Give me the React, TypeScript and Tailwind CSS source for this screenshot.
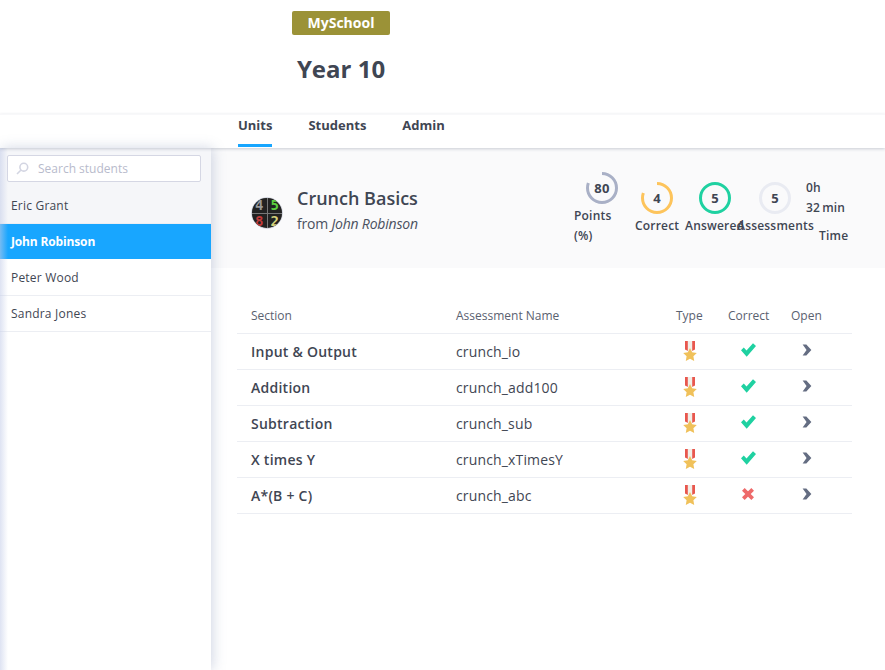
import React from "react";

const FONT = "font-['Open_Sans','Noto_Sans',sans-serif]";

function Ring({ value, color, pct = 100 }: { value: string; color: string; pct?: number }) {
  const r = 14.5;
  const c = 2 * Math.PI * r;
  return (
    <div className="relative h-8 w-8">
      <svg width="32" height="32" viewBox="0 0 32 32" className="-rotate-90">
        <circle cx="16" cy="16" r={r} fill="none" stroke={color} strokeWidth="3" strokeDasharray={`${(c * pct) / 100} ${c}`} />
      </svg>
      <span className="absolute inset-0 flex items-center justify-center text-[13px] font-bold text-[#3f4653]">{value}</span>
    </div>
  );
}

function Medal() {
  return (
    <svg width="14" height="21" viewBox="0 0 14 21">
      <path d="M2 0h10v8.5L7 11 2 8.5z" fill="#e8574e" />
      <path d="M4.8 0h4.4v10H4.8z" fill="#f1efe9" />
      <path d="M7 7l2.1 4.2 4.7.7-3.4 3.3.8 4.8L7 17.8 2.8 20l.8-4.8L.2 11.9l4.7-.7z" fill="#f0c15a" />
    </svg>
  );
}

function Check() {
  return (
    <svg width="15" height="14" viewBox="0 0 15 14">
      <path d="M0 7.2l2.8-2.6 2.7 2.9L12 0.3l3 2.6L5.7 13.7z" fill="#1fd1a1" />
    </svg>
  );
}

function Cross() {
  return (
    <svg width="14" height="14" viewBox="0 0 12 12">
      <path d="M2 2l8 8M10 2l-8 8" stroke="#ee6a6a" strokeWidth="3.2" />
    </svg>
  );
}

function Chevron() {
  return (
    <svg width="10" height="12" viewBox="0 0 9 11">
      <path d="M0.5 0.5h3.4L8.5 5.5l-4.6 5H0.5l3.6-5z" fill="#646d82" />
    </svg>
  );
}

const students = ["Eric Grant", "John Robinson", "Peter Wood", "Sandra Jones"];
const rows = [
  ["Input & Output", "crunch_io", true],
  ["Addition", "crunch_add100", true],
  ["Subtraction", "crunch_sub", true],
  ["X times Y", "crunch_xTimesY", true],
  ["A*(B + C)", "crunch_abc", false],
] as const;

export default function App() {
  return (
    <div className={`${FONT} flex h-[670px] w-[885px] flex-col overflow-hidden bg-white text-[#3f4653]`}>
      <header className="h-[114px] shrink-0 pl-[292px] pt-[11px]">
        <div className="flex h-6 w-[98px] items-center justify-center rounded-[2px] bg-[#9b9237] text-sm font-bold text-white">MySchool</div>
        <h1 className="mt-4 w-[98px] whitespace-nowrap text-center text-[24px] leading-[36px] font-bold">Year 10</h1>
      </header>
      <nav className="relative z-20 flex h-[34px] shrink-0 gap-9 border-t border-[#f8f8fa] pl-[238px] text-[13px] font-bold shadow-[0_1px_3px_rgba(60,70,100,0.25)]">
        <div className="h-[32px] border-b-[3px] border-[#18a6ff] pt-[1px]">Units</div>
        <div className="pt-[1px]">Students</div>
        <div className="pt-[1px]">Admin</div>
      </nav>
      <div className="flex min-h-0 flex-1">
        <aside className="relative z-10 w-[211px] shrink-0 bg-white shadow-[2px_0_12px_rgba(110,125,170,0.3)]">
          <div className="h-[40px] bg-[#f5f6f9] pl-[7px] pr-[10px] pt-[7px]">
            <div className="flex h-[27px] items-center rounded-[2px] border border-[#d5d7e4] bg-white pl-[8px]">
              <svg width="13" height="13" viewBox="0 0 13 13" fill="none" stroke="#d3d5e2" strokeWidth="1.6">
                <circle cx="7.8" cy="5.2" r="3.9" />
                <path d="M4.8 8.2L1 12" />
              </svg>
              <span className="ml-[9px] text-xs text-[#b8bbcc]">Search students</span>
            </div>
          </div>
          {students.map((s, i) => (
            <div
              key={s}
              className={`flex items-center pl-[11px] text-xs ${
                i === 1
                  ? "mb-px h-[35px] bg-[#18a6ff] font-bold tracking-[-0.15px] text-white"
                  : `h-9 border-b border-[#eceef3] tracking-[0.2px] ${i === 0 ? "bg-[#f5f6f9]" : "bg-white"}`
              }`}
            >
              {s}
            </div>
          ))}
          <div className="pointer-events-none absolute inset-y-0 left-0 w-2 bg-linear-to-r from-[rgba(195,204,232,0.55)] to-transparent" />
        </aside>
        <main className="min-w-0 flex-1">
          <section className="flex h-[120px] bg-[#fafafb] pl-[40px]">
            <div className="mt-[49px] flex h-8 w-8 shrink-0 self-start overflow-hidden rounded-full border border-[#cfd3dd] bg-[#222]">
              <div className="grid h-full w-full grid-cols-2 gap-px bg-[#777] text-center font-['DejaVu_Sans_Mono',monospace] text-[14px] leading-[15px] font-bold">
                <span className="bg-[#222] text-[#9a9a9a]">4</span>
                <span className="bg-[#222] text-[#5ccf3f]">5</span>
                <span className="bg-[#222] text-[#c23a3a]">8</span>
                <span className="bg-[#222] text-[#d4d07a]">2</span>
              </div>
            </div>
            <div className="ml-[14px] mt-[37px] w-[277px] shrink-0">
              <h2 className="text-[18px] leading-[26px] font-semibold whitespace-nowrap">Crunch Basics</h2>
              <p className="mt-[2px] text-sm leading-[22px] tracking-[-0.2px] whitespace-nowrap text-[#4a5160]">
                from <em className="font-normal">John Robinson</em>
              </p>
            </div>
            <div className="flex text-xs leading-5 font-semibold tracking-[0.2px]">
              <div className="w-[61px] pt-6">
                <div className="ml-3"><Ring value="80" color="#a9b0c6" pct={80} /></div>
                <div className="mt-[2px] w-10">Points (%)</div>
              </div>
              <div className="w-[50px] pt-[34px]">
                <div className="ml-[6px]"><Ring value="4" color="#fdc45c" pct={80} /></div>
                <div className="mt-[2px] whitespace-nowrap">Correct</div>
              </div>
              <div className="w-[52px] pt-[34px]">
                <div className="ml-[14px]"><Ring value="5" color="#1fd1a1" /></div>
                <div className="mt-[2px] whitespace-nowrap">Answered</div>
              </div>
              <div className="w-[69px] pt-[34px]">
                <div className="ml-[22px]"><Ring value="5" color="#e9ebf2" /></div>
                <div className="mt-[2px] whitespace-nowrap">Assessments</div>
              </div>
              <div className="w-[50px] pt-[30px]">
                <div>0h</div>
                <div>32<span className="ml-[2px]">min</span></div>
                <div className="ml-[13px] mt-2">Time</div>
              </div>
            </div>
          </section>
          <section className="pl-[26px] pr-[33px] pt-[30px]">
            <div className="flex h-[36px] items-center border-b border-[#eceef3] pl-[14px] text-xs text-[#5a6170]">
              <div className="w-[205px]">Section</div>
              <div className="w-[220px]">Assessment Name</div>
              <div className="w-[52px]">Type</div>
              <div className="w-[63px]">Correct</div>
              <div>Open</div>
            </div>
            {rows.map(([name, id, ok]) => (
              <div key={id} className="flex h-9 items-center border-b border-[#eceef3] pl-[14px] text-sm">
                <div className="w-[205px] font-semibold tracking-[0.25px]">{name}</div>
                <div className="w-[220px] tracking-[0.15px]">{id}</div>
                <div className="flex w-[52px] pl-[7px]"><Medal /></div>
                <div className="-mt-[3px] flex w-[64px] pl-[13px]">{ok ? <Check /> : <Cross />}</div>
                <div className="-mt-[3px] flex pl-[10px]"><Chevron /></div>
              </div>
            ))}
          </section>
        </main>
      </div>
    </div>
  );
}
